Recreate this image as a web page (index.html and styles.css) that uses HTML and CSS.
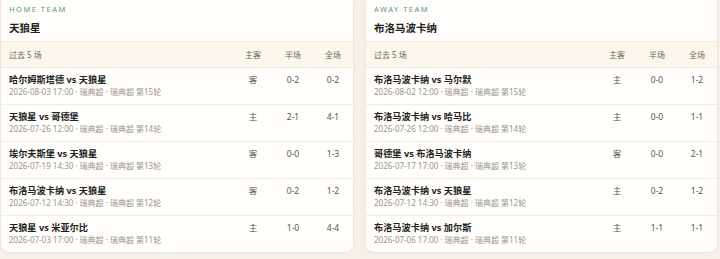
FILE: index.html
```html
<!DOCTYPE html>
<html lang="zh">
<head>
<meta charset="utf-8">
<link rel="stylesheet" href="styles.css">
</head>
<body>
<div class="grid">
  <section class="card">
    <div class="card-head">
      <div class="label">HOME TEAM</div>
      <div class="team">天狼星</div>
    </div>
    <div class="thead">
      <div class="th-title">过去 5 场</div>
      <div class="col">主客</div>
      <div class="col">半场</div>
      <div class="col">全场</div>
    </div>
    <div class="row">
      <div class="info"><div class="title">哈尔姆斯塔德 vs 天狼星</div><div class="meta">2026-08-03 17:00 · 瑞典超 · 瑞典超 第15轮</div></div>
      <div class="col val">客</div><div class="col val">0-2</div><div class="col val">0-2</div>
    </div>
    <div class="row">
      <div class="info"><div class="title">天狼星 vs 哥德堡</div><div class="meta">2026-07-26 12:00 · 瑞典超 · 瑞典超 第14轮</div></div>
      <div class="col val">主</div><div class="col val">2-1</div><div class="col val">4-1</div>
    </div>
    <div class="row">
      <div class="info"><div class="title">埃尔夫斯堡 vs 天狼星</div><div class="meta">2026-07-19 14:30 · 瑞典超 · 瑞典超 第13轮</div></div>
      <div class="col val">客</div><div class="col val">0-0</div><div class="col val">1-3</div>
    </div>
    <div class="row">
      <div class="info"><div class="title">布洛马波卡纳 vs 天狼星</div><div class="meta">2026-07-12 14:30 · 瑞典超 · 瑞典超 第12轮</div></div>
      <div class="col val">客</div><div class="col val">0-2</div><div class="col val">1-2</div>
    </div>
    <div class="row">
      <div class="info"><div class="title">天狼星 vs 米亚尔比</div><div class="meta">2026-07-03 17:00 · 瑞典超 · 瑞典超 第11轮</div></div>
      <div class="col val">主</div><div class="col val">1-0</div><div class="col val">4-4</div>
    </div>
  </section>
  <section class="card">
    <div class="card-head">
      <div class="label">AWAY TEAM</div>
      <div class="team">布洛马波卡纳</div>
    </div>
    <div class="thead">
      <div class="th-title">过去 5 场</div>
      <div class="col">主客</div>
      <div class="col">半场</div>
      <div class="col">全场</div>
    </div>
    <div class="row">
      <div class="info"><div class="title">布洛马波卡纳 vs 马尔默</div><div class="meta">2026-08-02 12:00 · 瑞典超 · 瑞典超 第15轮</div></div>
      <div class="col val">主</div><div class="col val">0-0</div><div class="col val">1-2</div>
    </div>
    <div class="row">
      <div class="info"><div class="title">布洛马波卡纳 vs 哈马比</div><div class="meta">2026-07-26 12:00 · 瑞典超 · 瑞典超 第14轮</div></div>
      <div class="col val">主</div><div class="col val">0-0</div><div class="col val">1-1</div>
    </div>
    <div class="row">
      <div class="info"><div class="title">哥德堡 vs 布洛马波卡纳</div><div class="meta">2026-07-17 17:00 · 瑞典超 · 瑞典超 第13轮</div></div>
      <div class="col val">客</div><div class="col val">0-0</div><div class="col val">2-1</div>
    </div>
    <div class="row">
      <div class="info"><div class="title">布洛马波卡纳 vs 天狼星</div><div class="meta">2026-07-12 14:30 · 瑞典超 · 瑞典超 第12轮</div></div>
      <div class="col val">主</div><div class="col val">0-2</div><div class="col val">1-2</div>
    </div>
    <div class="row">
      <div class="info"><div class="title">布洛马波卡纳 vs 加尔斯</div><div class="meta">2026-07-06 17:00 · 瑞典超 · 瑞典超 第11轮</div></div>
      <div class="col val">主</div><div class="col val">1-1</div><div class="col val">1-1</div>
    </div>
  </section>
</div>
</body>
</html>
```
FILE: styles.css
```css
html, body {
  margin: 0;
  padding: 0;
  background: #f4f1e9;
  font-family: "Noto Sans", "Noto Sans CJK SC", sans-serif;
  color: #222;
}
.grid {
  display: grid;
  grid-template-columns: 354px 353px;
  gap: 11px;
  margin-top: -5px;
}
.card {
  background: #fffefb;
  border: 1px solid #ece7dd;
  border-radius: 9px;
  overflow: hidden;
  box-shadow: 0 1px 2px rgba(120, 100, 60, 0.06);
}
.card-head {
  padding: 9px 8px 6px 8px;
}
.label {
  font-size: 7.5px;
  line-height: 9px;
  letter-spacing: 1.5px;
  color: #55938a;
}
.team {
  margin-top: 7px;
  font-size: 10.5px;
  line-height: 14px;
  font-weight: 700;
  color: #1e1e1e;
}
.thead {
  display: grid;
  grid-template-columns: 1fr 40px 40px 40px;
  align-items: center;
  height: 25px;
  padding-left: 8px;
  background: #fbf7ec;
  border-top: 1px solid #f0ebe0;
  border-bottom: 1px solid #f0ebe2;
  font-size: 8px;
  color: #6f6555;
}
.col {
  text-align: center;
}
.row {
  display: grid;
  grid-template-columns: 1fr 40px 40px 40px;
  align-items: start;
  padding: 7px 0 7px 8px;
  border-bottom: 1px solid #f1ede6;
}
.row:last-child {
  border-bottom: none;
}
.title {
  font-size: 9.2px;
  line-height: 10px;
  font-weight: 700;
  color: #222;
  margin-bottom: 2px;
}
.meta {
  font-size: 8px;
  line-height: 10px;
  color: #9a958d;
}
.val {
  font-size: 8.5px;
  line-height: 10px;
  color: #555;
}
```
